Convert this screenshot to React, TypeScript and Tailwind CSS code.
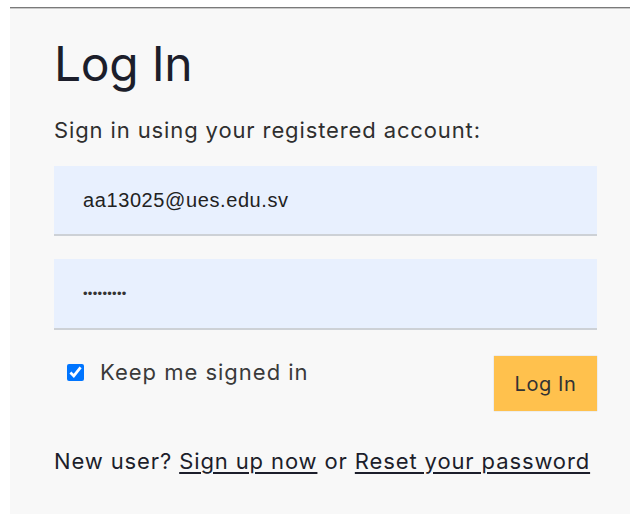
import React from "react";

const sans = { fontFamily: "Inter, 'Noto Sans', Arial, sans-serif" };

export default function App() {
  return (
    <div className="w-[630px] h-[514px] bg-white pt-[7px] pl-[10px] overflow-hidden" style={sans}>
      <div className="h-[1px] bg-[#7a7a7a]" />
      <div className="h-[1px] bg-[#c9c9c9]" />
      <div className="h-[505px] bg-[#f8f8f8] pl-[44px] pr-[33px] pt-[25px]">
        <h1 className="text-[48px] leading-[60px] font-normal text-[#1c1e2b] tracking-[-0.3px]">Log In</h1>
        <p className="mt-[22px] text-[22px] leading-[28px] tracking-[0.04em] text-[#2f2f2f]">
          Sign in using your registered account:
        </p>

        <form className="mt-[22px] flex flex-col" onSubmit={(e) => e.preventDefault()}>
          <input
            type="email"
            defaultValue="aa13025@ues.edu.sv"
            className="w-[543px] h-[70px] bg-[#e8f0fe] border-b-2 border-[#cdd1d6] px-[29px] text-[20px] tracking-[0.6px] text-[#222] outline-none"
            style={{ fontFamily: "Arial, 'Liberation Sans', sans-serif" }}
          />
          <input
            type="password"
            defaultValue="password1"
            className="mt-[23px] w-[543px] h-[71px] bg-[#e8f0fe] border-b-2 border-[#cdd1d6] px-[29px] text-[13px] tracking-[0.3px] text-[#333] outline-none"
            style={{ fontFamily: "Arial, 'Liberation Sans', sans-serif" }}
          />

          <div className="mt-[26px] flex items-start justify-between w-[543px]">
            <label className="flex items-center gap-[16px] pl-[13px] pt-[2px] text-[22px] leading-[28px] tracking-[0.045em] text-[#3a3a3a]">
              <input type="checkbox" defaultChecked className="w-[17px] h-[17px] accent-[#0075ff] m-0" />
              Keep me signed in
            </label>
            <button
              type="submit"
              className="w-[103px] h-[55px] bg-[#ffc14d] text-[20px] tracking-[0.03em] text-[#333] shadow-[0_0_1px_rgba(0,0,0,0.25)]"
            >
              Log In
            </button>
          </div>
        </form>

        <p className="mt-[35px] text-[22px] leading-[30px] tracking-[0.04em] text-[#1c1e2b]">
          New user? <a href="#" className="underline underline-offset-[3px]">Sign up now</a> or{" "}
          <a href="#" className="underline underline-offset-[3px]">Reset your password</a>
        </p>
      </div>
    </div>
  );
}
